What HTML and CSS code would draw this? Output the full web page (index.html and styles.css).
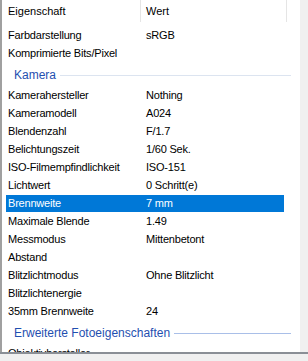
FILE: index.html
```html
<!DOCTYPE html>
<html>
<head>
  <title>Eigenschaften</title>
  <link rel="stylesheet" href="styles.css">
</head>
<body>
  <div class="window">
    <div class="list">
      <div class="head">
        <span class="col-name">Eigenschaft</span>
        <span class="col-value">Wert</span>
      </div>

      <div class="rows">
        <div class="row"><span class="name">Farbdarstellung</span><span class="value">sRGB</span></div>
        <div class="row"><span class="name">Komprimierte Bits/Pixel</span><span class="value"></span></div>

        <div class="group"><span>Kamera</span><i class="rule"></i></div>
        <div class="row"><span class="name">Kamerahersteller</span><span class="value">Nothing</span></div>
        <div class="row"><span class="name">Kameramodell</span><span class="value">A024</span></div>
        <div class="row"><span class="name">Blendenzahl</span><span class="value">F/1.7</span></div>
        <div class="row"><span class="name">Belichtungszeit</span><span class="value">1/60 Sek.</span></div>
        <div class="row"><span class="name">ISO-Filmempfindlichkeit</span><span class="value">ISO-151</span></div>
        <div class="row"><span class="name">Lichtwert</span><span class="value">0 Schritt(e)</span></div>
        <div class="row selected"><span class="name">Brennweite</span><span class="value">7 mm</span></div>
        <div class="row"><span class="name">Maximale Blende</span><span class="value">1.49</span></div>
        <div class="row"><span class="name">Messmodus</span><span class="value">Mittenbetont</span></div>
        <div class="row"><span class="name">Abstand</span><span class="value"></span></div>
        <div class="row"><span class="name">Blitzlichtmodus</span><span class="value">Ohne Blitzlicht</span></div>
        <div class="row"><span class="name">Blitzlichtenergie</span><span class="value"></span></div>
        <div class="row"><span class="name">35mm Brennweite</span><span class="value">24</span></div>

        <div class="group focused"><span>Erweiterte Fotoeigenschaften</span><i class="rule"></i></div>
        <div class="row"><span class="name">Objektivhersteller</span><span class="value"></span></div>
      </div>
    </div>
    <div class="scroll"></div>
  </div>
  <div class="footer"></div>
</body>
</html>
```

FILE: styles.css
```css
body {
  margin: 0;
  width: 308px;
  height: 361px;
  overflow: hidden;
  background: #f0f0f0;
  font-family: 'Liberation Sans', Arial, sans-serif;
  font-size: 11px;
  color: #000;
}

.window {
  display: flex;
  height: 352px;
  border-bottom: 2px solid #8a8f96;
  background: #fff;
}

.list {
  width: 298px;
  border-left: 2px solid #a0a0a0;
  overflow: hidden;
}

.scroll {
  flex: 1;
  background: #f0f0f0;
}

.head {
  display: flex;
  height: 22px;
  align-items: center;
  margin-bottom: 5px;
}

.col-name {
  width: 132px;
  padding-left: 6px;
  height: 22px;
  line-height: 22px;
  border-right: 1px solid #e5e5e5;
}

.col-value {
  width: 140px;
  padding-left: 5px;
  height: 22px;
  line-height: 22px;
  border-right: 1px solid #e5e5e5;
}

.row {
  display: flex;
  height: 17px;
  line-height: 17px;
  margin: 0 16px 1px 4px;
  white-space: nowrap;
  letter-spacing: -0.2px;
}

.row .name {
  width: 138px;
  padding-left: 2px;
}

.row .value {
  flex: 1;
}

.row.selected {
  background: #0078d7;
  color: #fff;
}

.group {
  display: flex;
  align-items: center;
  height: 24px;
  padding: 0 9px 0 12px;
  color: #1f4fb0;
  font-size: 12px;
}

.group .rule {
  flex: 1;
  height: 1px;
  margin-left: 4px;
  background: #dce4f0;
}

.group.focused .rule {
  background: #a9bfe8;
}

.footer {
  height: 7px;
}
```
